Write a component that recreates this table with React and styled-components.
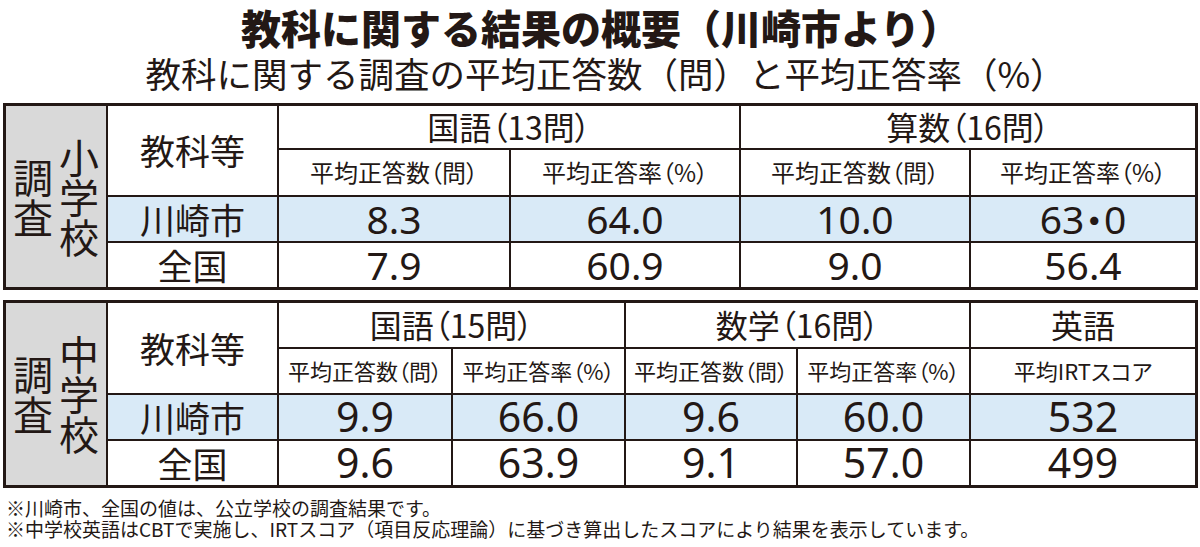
import React from "react";
import styled, { createGlobalStyle } from "styled-components";

const INK = "#231815";
const GRAY = "#d9d9d9";
const BLUE = "#d9eaf7";

const Global = createGlobalStyle`
  html, body { margin: 0; padding: 0; background: #fff; }
  body {
    font-family: "Noto Sans CJK JP", "Noto Sans", sans-serif;
    color: ${INK};
  }
`;

const Page = styled.div`
  width: 1200px;
  height: 547px;
  box-sizing: border-box;
  padding: 2px 2px 0 3px;
  overflow: hidden;
`;

const Heading = styled.header`
  display: flex;
  flex-direction: column;
  align-items: center;
  margin-bottom: 9px;
`;

const Title = styled.h1`
  margin: 0;
  font-size: 40px;
  line-height: 50px;
  font-weight: 900;
  white-space: nowrap;
`;

const Subtitle = styled.h2`
  margin: 0;
  font-size: 35.5px;
  line-height: 42px;
  font-weight: 400;
  white-space: nowrap;
  padding-left: 10px;
`;

const Table = styled.div`
  display: grid;
  grid-template-columns: ${(p) => p.$cols};
  grid-template-rows: ${(p) => p.$rows};
  border: 3px solid ${INK};
  & + & {
    margin-top: 10px;
  }
`;

const Cell = styled.div`
  box-sizing: border-box;
  display: flex;
  align-items: center;
  justify-content: center;
  grid-column: span ${(p) => p.$cs || 1};
  grid-row: span ${(p) => p.$rs || 1};
  background: ${(p) =>
    p.$tone === "gray" ? GRAY : p.$tone === "blue" ? BLUE : "#fff"};
  border-right: ${(p) => (p.$end ? 0 : 2)}px solid ${INK};
  border-bottom: ${(p) => (p.$foot ? 0 : 2)}px solid ${INK};
  white-space: nowrap;
  line-height: 1;
  font-feature-settings: "palt";
`;

const SideCell = styled(Cell)`
  flex-direction: row-reverse;
  gap: 6px;
  padding-top: 2px;
`;

const VerticalWord = styled.span`
  writing-mode: vertical-rl;
  text-orientation: upright;
  font-size: 40px;
  line-height: 40px;
  font-weight: 400;
  font-feature-settings: normal;
`;

const LabelCell = styled(Cell)`
  font-size: 35px;
  font-weight: 400;
  padding-bottom: 2px;
`;

const GroupCell = styled(Cell)`
  font-size: 32px;
  font-weight: 400;
  padding-bottom: 2px;
`;

const SubCell = styled(Cell)`
  font-size: ${(p) => p.$size}px;
  font-weight: 400;
  padding-bottom: 2px;
`;

const ValueCell = styled(Cell)`
  font-family: "Noto Sans", "Noto Sans CJK JP", sans-serif;
  font-size: ${(p) => p.$size}px;
  font-weight: 400;
  padding-bottom: 2px;
  & > span {
    font-family: "Noto Sans CJK JP", sans-serif;
  }
`;

const Notes = styled.div`
  margin-top: 9px;
  padding-left: 3px;
  font-size: 19px;
  line-height: 21px;
  font-weight: 400;
  white-space: nowrap;
`;

const tables = [
  {
    school: "小学校",
    cols: "102px 171px 232px 230px 230px 224px",
    rows: "44px 47px 46px 44px",
    subSize: 24,
    valueSize: 39,
    groups: [
      { title: "国語（13問）", subs: ["平均正答数（問）", "平均正答率（%）"] },
      { title: "算数（16問）", subs: ["平均正答数（問）", "平均正答率（%）"] },
    ],
    data: [
      { label: "川崎市", tone: "blue", values: ["8.3", "64.0", "10.0", "63・0"] },
      { label: "全国", values: ["7.9", "60.9", "9.0", "56.4"] },
    ],
  },
  {
    school: "中学校",
    cols: "102px 171px 174px 173px 172px 173px 224px",
    rows: "46px 46px 46px 44px",
    subSize: 22,
    valueSize: 41,
    groups: [
      { title: "国語（15問）", subs: ["平均正答数（問）", "平均正答率（%）"] },
      { title: "数学（16問）", subs: ["平均正答数（問）", "平均正答率（%）"] },
      { title: "英語", subs: ["平均IRTスコア"] },
    ],
    data: [
      { label: "川崎市", tone: "blue", values: ["9.9", "66.0", "9.6", "60.0", "532"] },
      { label: "全国", values: ["9.6", "63.9", "9.1", "57.0", "499"] },
    ],
  },
];

function renderValue(v) {
  if (v.includes("・")) {
    const [a, b] = v.split("・");
    return (
      <>
        {a}
        <span>・</span>
        {b}
      </>
    );
  }
  return v;
}

function ResultTable({ t }) {
  const subs = t.groups.flatMap((g) => g.subs);
  return (
    <Table $cols={t.cols} $rows={t.rows}>
      <SideCell $tone="gray" $rs={4} $foot>
        <VerticalWord>{t.school}</VerticalWord>
        <VerticalWord>調査</VerticalWord>
      </SideCell>
      <LabelCell $rs={2}>教科等</LabelCell>
      {t.groups.map((g, i) => (
        <GroupCell key={g.title} $cs={g.subs.length} $end={i === t.groups.length - 1}>
          {g.title}
        </GroupCell>
      ))}
      {subs.map((s, i) => (
        <SubCell key={i} $size={t.subSize} $end={i === subs.length - 1}>
          {s}
        </SubCell>
      ))}
      {t.data.map((row, r) => {
        const foot = r === t.data.length - 1;
        return (
          <React.Fragment key={row.label}>
            <LabelCell $tone={row.tone} $foot={foot}>
              {row.label}
            </LabelCell>
            {row.values.map((v, i) => (
              <ValueCell
                key={i}
                $size={t.valueSize}
                $tone={row.tone}
                $foot={foot}
                $end={i === row.values.length - 1}
              >
                {renderValue(v)}
              </ValueCell>
            ))}
          </React.Fragment>
        );
      })}
    </Table>
  );
}

export default function App() {
  return (
    <>
      <Global />
      <Page>
        <Heading>
          <Title>教科に関する結果の概要（川崎市より）</Title>
          <Subtitle>教科に関する調査の平均正答数（問）と平均正答率（%）</Subtitle>
        </Heading>
        {tables.map((t) => (
          <ResultTable key={t.school} t={t} />
        ))}
        <Notes>
          <div>※川崎市、全国の値は、公立学校の調査結果です。</div>
          <div>
            ※中学校英語はCBTで実施し、IRTスコア（項目反応理論）に基づき算出したスコアにより結果を表示しています。
          </div>
        </Notes>
      </Page>
    </>
  );
}
